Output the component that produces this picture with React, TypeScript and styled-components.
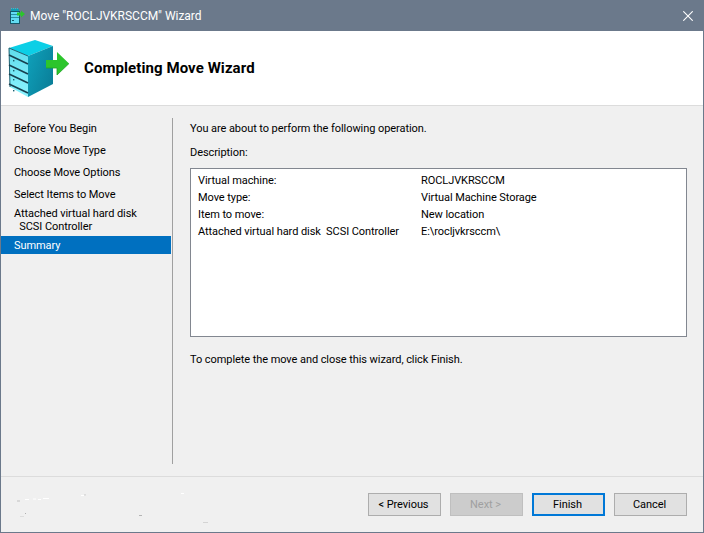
import React from "react";
import styled, { createGlobalStyle } from "styled-components";

const Global = createGlobalStyle`
  html, body { margin: 0; padding: 0; background: #f0f0f0; }
  * { box-sizing: border-box; }
`;

const Window = styled.div`
  width: 704px;
  height: 533px;
  display: flex;
  flex-direction: column;
  border: 1px solid #6b798b;
  border-top: 0;
  background: #f0f0f0;
  color: #000;
  font-family: Roboto, "Liberation Sans", sans-serif;
  font-size: 11px;
  letter-spacing: -0.07px;
  overflow: hidden;
`;

const TitleBar = styled.div`
  height: 31px;
  flex: none;
  margin: 0 -1px;
  padding: 0 11px 0 10px;
  background: #6b798b;
  color: #fff;
  display: flex;
  align-items: center;
  font-size: 12px;
  letter-spacing: -0.02px;
  gap: 4px;
`;

const TitleText = styled.span`
  flex: 1;
`;

const Header = styled.div`
  height: 74px;
  flex: none;
  background: #fff;
  display: flex;
  align-items: center;
  padding-left: 7px;
`;

const HeaderTitle = styled.h1`
  margin: 0 0 0 14px;
  font-size: 15px;
  font-weight: 700;
  letter-spacing: 0.08px;
`;

const Rule = styled.div`
  height: 1px;
  flex: none;
  background: #dcdcdc;
`;

const Body = styled.div`
  flex: 1;
  display: flex;
  padding: 12px 0;
`;

const Sidebar = styled.nav`
  width: 170px;
  flex: none;
  display: flex;
  flex-direction: column;
`;

const NavItem = styled.div<{ $active?: boolean; $tall?: boolean }>`
  height: ${(p) => (p.$active ? "18px" : p.$tall ? "31px" : "22px")};
  line-height: ${(p) => (p.$tall ? "13px" : p.$active ? "20px" : "21px")};
  padding: ${(p) => (p.$tall ? "1px 0 0 13px" : "0 0 0 13px")};
  margin-top: ${(p) => (p.$active ? "-1px" : "0")};
  background: ${(p) => (p.$active ? "#0070c0" : "transparent")};
  color: ${(p) => (p.$active ? "#fff" : "#000")};
  white-space: pre;
`;

const Divider = styled.div`
  width: 1px;
  flex: none;
  margin-left: 1px;
  background: #a0a0a0;
`;

const Main = styled.main`
  flex: 1;
  padding: 3px 16px 0 17px;
  display: flex;
  flex-direction: column;
`;

const Para = styled.p<{ $mt: number }>`
  margin: ${(p) => p.$mt}px 0 0;
  line-height: 16px;
  height: 16px;
`;

const DescBox = styled.div`
  margin-top: 7px;
  height: 169px;
  background: #fff;
  border: 1px solid #828790;
  padding: 3px 7px;
`;

const DescRow = styled.div`
  display: grid;
  grid-template-columns: 223px 1fr;
  height: 17px;
  line-height: 17px;
`;

const DescLabel = styled.span`
  white-space: pre;
`;

const Footer = styled.footer`
  height: 55px;
  flex: none;
  display: flex;
  align-items: flex-start;
  gap: 9px;
  padding: 16px 16px 0 14px;
`;

const Specks = styled.svg`
  flex: none;
  margin-right: auto;
`;

const Button = styled.button<{ $primary?: boolean }>`
  width: 73px;
  height: 23px;
  padding: 0 2px 0 0;
  background: #e1e1e1;
  border: ${(p) => (p.$primary ? "2px solid #0078d7" : "1px solid #adadad")};
  font: inherit;
  letter-spacing: inherit;
  color: #000;
  &:disabled {
    background: #cccccc;
    border-color: #bfbfbf;
    color: #a0a0a0;
  }
`;

const IconSvg = styled.svg`
  flex: none;
`;

const ServerBig = () => (
  <IconSvg width="62" height="60" viewBox="8 38 62 60">
    <defs>
      <linearGradient id="side" x1="0" y1="0" x2="1" y2="0.7">
        <stop offset="0" stopColor="#0fa2bc" />
        <stop offset="1" stopColor="#0a7f99" />
      </linearGradient>
      <linearGradient id="front" x1="0" y1="0" x2="0" y2="1">
        <stop offset="0" stopColor="#5fdcec" />
        <stop offset="1" stopColor="#8cf3ff" />
      </linearGradient>
    </defs>
    <polygon points="9,48 35,40 53,46 28,56" fill="#0ccfe6" />
    <polygon points="28,56 53,46 53,84 28,97" fill="url(#side)" />
    <polygon points="9,48 28,56 28,97 10,87" fill="url(#front)" />
    <polyline points="10,87 9,48 28,56" fill="none" stroke="#1d5f70" strokeWidth="1" />
    {[0, 10, 19, 29].map((d) => (
      <polyline
        key={d}
        points={`9,${55 + d} 28,${64 + d}`}
        fill="none"
        stroke="#17404f"
        strokeWidth="1.6"
      />
    ))}
    {[0, 10, 19, 30].map((d) => (
      <rect key={d} x="13" y={60 + d} width="1.4" height="1.4" fill="#1d5f70" />
    ))}
    <polygon points="46,60 57,60 57,52 69,63.5 57,75 57,68 46,68" fill="#2cc52c" />
    <polyline points="46,68 57,68 57,75 69,63.5" fill="none" stroke="#1fa326" strokeWidth="0.8" />
  </IconSvg>
);

const ServerSmall = () => (
  <IconSvg width="16" height="16" viewBox="10 7 16 16">
    <path d="M11 7.5h1M13 7.5h1M15 7.5h1M17 7.5h1" stroke="#2ac4d8" strokeWidth="1" />
    <rect x="11" y="8" width="8" height="2" fill="#119cb2" />
    <rect x="10.5" y="10.5" width="9" height="12" fill="#62dcf2" stroke="#15586a" />
    <path d="M11 13.5h7M11 16.5h8" stroke="#2a8fa4" strokeWidth="1" />
    <rect x="12" y="19" width="2" height="1" fill="#15586a" />
    <polygon points="17,11.5 21,11.5 21,9.5 25,13 21,16.5 21,14.5 17,14.5" fill="#2cc52c" />
  </IconSvg>
);

const CloseIcon = () => (
  <svg width="10" height="10" viewBox="0 0 10 10">
    <path d="M0.3 0.3L9.7 9.7M9.7 0.3L0.3 9.7" stroke="#fff" strokeWidth="1.1" fill="none" />
  </svg>
);

const steps = [
  "Before You Begin",
  "Choose Move Type",
  "Choose Move Options",
  "Select Items to Move",
];

const rows = [
  ["Virtual machine:", "ROCLJVKRSCCM"],
  ["Move type:", "Virtual Machine Storage"],
  ["Item to move:", "New location"],
  ["Attached virtual hard disk  SCSI Controller", "E:\\rocljvkrsccm\\"],
];

export default function App() {
  return (
    <>
      <Global />
      <Window>
        <TitleBar>
          <ServerSmall />
          <TitleText>Move "ROCLJVKRSCCM" Wizard</TitleText>
          <CloseIcon />
        </TitleBar>
        <Header>
          <ServerBig />
          <HeaderTitle>Completing Move Wizard</HeaderTitle>
        </Header>
        <Rule />
        <Body>
          <Sidebar>
            {steps.map((s) => (
              <NavItem key={s}>{s}</NavItem>
            ))}
            <NavItem $tall>{"Attached virtual hard disk\n  SCSI Controller"}</NavItem>
            <NavItem $active>Summary</NavItem>
          </Sidebar>
          <Divider />
          <Main>
            <Para $mt={0}>You are about to perform the following operation.</Para>
            <Para $mt={8}>Description:</Para>
            <DescBox>
              {rows.map(([a, b]) => (
                <DescRow key={a}>
                  <DescLabel>{a}</DescLabel>
                  <span>{b}</span>
                </DescRow>
              ))}
            </DescBox>
            <Para $mt={15}>To complete the move and close this wizard, click Finish.</Para>
          </Main>
        </Body>
        <Rule />
        <Footer>
          <Specks width="200" height="32" viewBox="15 493 200 32">
            <path d="M25 499.5h4M33 499h3M38 499.5h3M43 498.5h6M81 495.5h5M181 493.5h3" stroke="#fff" strokeWidth="1" />
            <rect x="17" y="500" width="3" height="2" fill="#d8d8d8" />
            <rect x="25" y="513" width="1" height="1" fill="#b0b0b0" />
            <rect x="84" y="494.5" width="2" height="1" fill="#c8c8c8" />
            <rect x="139" y="515" width="3" height="1" fill="#b4b4b4" />
            <rect x="203" y="522" width="5" height="1" fill="#d4d4d4" />
            <rect x="20" y="516" width="4" height="1" fill="#dddddd" />
          </Specks>
          <Button>&lt; Previous</Button>
          <Button disabled>Next &gt;</Button>
          <Button $primary>Finish</Button>
          <Button>Cancel</Button>
        </Footer>
      </Window>
    </>
  );
}
